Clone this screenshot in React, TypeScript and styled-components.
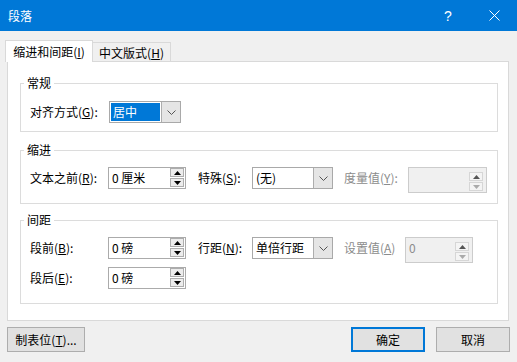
import React from 'react'
import styled, { createGlobalStyle } from 'styled-components'

const GlobalStyle = createGlobalStyle`
  html, body {
    margin: 0;
    padding: 0;
    background: #f0f0f0;
  }
  body {
    font-family: "Noto Sans CJK SC", "Noto Sans", sans-serif;
    font-size: 12px;
    line-height: 16px;
    color: #000;
  }
  * {
    box-sizing: border-box;
  }
`

const Dialog = styled.div`
  width: 517px;
  height: 362px;
  background: #f0f0f0;
  display: flex;
  flex-direction: column;
  overflow: hidden;
`

const TitleBar = styled.div`
  height: 31px;
  background: #0078d7;
  color: #fff;
  display: flex;
  align-items: center;
  padding-left: 8px;
  flex-shrink: 0;
`

const Title = styled.div`
  flex: 1;
  font-size: 12px;
`

const TitleButton = styled.div`
  width: 46px;
  height: 31px;
  display: flex;
  align-items: center;
  justify-content: center;
  font-family: "Liberation Sans", sans-serif;
  font-size: 14px;
  color: #fff;
`

const Body = styled.div`
  padding: 9px 8px 0 7px;
  display: flex;
  flex-direction: column;
`

const TabRow = styled.div`
  display: flex;
  align-items: flex-end;
  height: 22px;
  margin-left: -2px;
  margin-bottom: -1px;
  position: relative;
  z-index: 1;
`

const Tab = styled.div<{ $active?: boolean }>`
  width: ${({ $active }) => ($active ? '88px' : '78px')};
  height: ${({ $active }) => ($active ? '22px' : '19px')};
  margin-bottom: ${({ $active }) => ($active ? '0' : '1px')};
  background: ${({ $active }) => ($active ? '#fff' : '#f0f0f0')};
  border: 1px solid #d9d9d9;
  border-bottom: none;
  border-left: ${({ $active }) => ($active ? '1px solid #d9d9d9' : 'none')};
  display: flex;
  align-items: center;
  justify-content: center;
  padding-top: ${({ $active }) => ($active ? '0' : '2px')};
  white-space: nowrap;
`

const Panel = styled.div`
  height: 260px;
  background: #fff;
  border: 1px solid #d9d9d9;
  padding: 13px 10px 0 12px;
  display: flex;
  flex-direction: column;
`

const Group = styled.fieldset<{ $top: number; $bottom: number }>`
  margin: ${({ $top }) => $top}px 0 0 0;
  border: 1px solid #dcdcdc;
  padding: 0 0 ${({ $bottom }) => $bottom}px 9px;
  min-width: 0;
  display: flex;
  flex-direction: column;
  gap: 8px;
`

const Legend = styled.legend<{ $pad: number }>`
  padding: 0 3px;
  margin-left: -6px;
  line-height: 16px;
  margin-bottom: ${({ $pad }) => $pad}px;
`

const Row = styled.div`
  display: flex;
  align-items: flex-start;
  height: 22px;
`

const Label = styled.div<{ $w: number; $disabled?: boolean }>`
  width: ${({ $w }) => $w}px;
  flex-shrink: 0;
  height: 22px;
  line-height: 22px;
  color: ${({ $disabled }) => ($disabled ? '#8c8c8c' : '#000')};
  white-space: nowrap;
`

const Gap = styled.div<{ $w: number }>`
  width: ${({ $w }) => $w}px;
  flex-shrink: 0;
`

const Combo = styled.div<{ $w: number }>`
  width: ${({ $w }) => $w}px;
  height: 22px;
  border: 1px solid #a9a9a9;
  background: #fff;
  display: flex;
  flex-shrink: 0;
`

const ComboText = styled.div<{ $selected?: boolean }>`
  flex: 1;
  margin: 1px;
  padding-left: 2px;
  line-height: 18px;
  background: ${({ $selected }) => ($selected ? '#0078d7' : 'transparent')};
  color: ${({ $selected }) => ($selected ? '#fff' : '#000')};
  white-space: nowrap;
`

const ComboArrow = styled.div`
  width: 19px;
  background: #e5e5e5;
  border-left: 1px solid #adadad;
  display: flex;
  align-items: center;
  justify-content: center;
`

const Spin = styled.div<{ $w: number; $disabled?: boolean }>`
  width: ${({ $w }) => $w}px;
  height: ${({ $disabled }) => ($disabled ? '26px' : '22px')};
  border: 1px solid ${({ $disabled }) => ($disabled ? '#cccccc' : '#ababab')};
  background: ${({ $disabled }) => ($disabled ? '#f0f0f0' : '#fff')};
  color: ${({ $disabled }) => ($disabled ? '#8c8c8c' : '#000')};
  display: flex;
  align-items: flex-start;
  flex-shrink: 0;
`

const SpinText = styled.div`
  flex: 1;
  padding: 2px 0 0 3px;
  line-height: 16px;
  white-space: nowrap;
`

const SpinButtons = styled.div<{ $disabled?: boolean }>`
  width: 14px;
  margin: ${({ $disabled }) => ($disabled ? '4px 3px 0 0' : '0 1px 0 0')};
  display: flex;
  flex-direction: column;
  gap: 1px;
`

const SpinButton = styled.div<{ $faded?: boolean }>`
  height: 9px;
  border: 1px solid ${({ $faded }) => ($faded ? '#d6d6d6' : '#adadad')};
  background: ${({ $faded }) => ($faded ? '#f4f4f4' : '#ececec')};
  display: flex;
  align-items: center;
  justify-content: center;
`

const Footer = styled.div`
  display: flex;
  align-items: center;
  margin-top: 6px;
  margin-right: -1px;
  gap: 11px;
`

const Button = styled.div<{ $w: number; $default?: boolean }>`
  width: ${({ $w }) => $w}px;
  height: 25px;
  background: #e1e1e1;
  border: ${({ $default }) => ($default ? '2px solid #0078d7' : '1px solid #adadad')};
  display: flex;
  align-items: center;
  justify-content: center;
  white-space: nowrap;
`

const Spacer = styled.div`
  flex: 1;
`

const Chevron = () => (
  <svg width="9" height="5" viewBox="0 0 9 5">
    <polyline points="0.5,0.5 4.5,4.5 8.5,0.5" fill="none" stroke="#555" strokeWidth="1" />
  </svg>
)

const Triangle = ({ up, color }: { up?: boolean; color: string }) => (
  <svg width="7" height="4" viewBox="0 0 7 4">
    <polygon points={up ? '0,4 3.5,0 7,4' : '0,0 3.5,4 7,0'} fill={color} />
  </svg>
)

const CloseIcon = () => (
  <svg width="11" height="11" viewBox="0 0 11 11">
    <path d="M0.5 0.5 L10.5 10.5 M10.5 0.5 L0.5 10.5" stroke="#fff" strokeWidth="1" />
  </svg>
)

const SpinBox = ({ width, value, disabled }: { width: number; value?: string; disabled?: boolean }) => (
  <Spin $w={width} $disabled={disabled}>
    <SpinText>{value}</SpinText>
    <SpinButtons $disabled={disabled}>
      <SpinButton $faded={disabled}>
        <Triangle up color={disabled ? '#555' : '#000'} />
      </SpinButton>
      <SpinButton $faded={disabled}>
        <Triangle color={disabled ? '#aaa' : '#000'} />
      </SpinButton>
    </SpinButtons>
  </Spin>
)

const ComboBox = ({ width, value, selected }: { width: number; value: string; selected?: boolean }) => (
  <Combo $w={width}>
    <ComboText $selected={selected}>{value}</ComboText>
    <ComboArrow>
      <Chevron />
    </ComboArrow>
  </Combo>
)

export default function App() {
  return (
    <Dialog>
      <GlobalStyle />
      <TitleBar>
        <Title>段落</Title>
        <TitleButton>?</TitleButton>
        <TitleButton>
          <CloseIcon />
        </TitleButton>
      </TitleBar>
      <Body>
        <TabRow>
          <Tab $active>
            缩进和间距(<u>I</u>)
          </Tab>
          <Tab>
            中文版式(<u>H</u>)
          </Tab>
        </TabRow>
        <Panel>
          <Group $top={0} $bottom={8}>
            <Legend $pad={10}>常规</Legend>
            <Row>
              <Label $w={79}>
                对齐方式(<u>G</u>):
              </Label>
              <ComboBox width={72} value="居中" selected />
            </Row>
          </Group>
          <Group $top={10} $bottom={14}>
            <Legend $pad={9}>缩进</Legend>
            <Row>
              <Label $w={78}>
                文本之前(<u>R</u>):
              </Label>
              <SpinBox width={78} value="0 厘米" />
              <Gap $w={12} />
              <Label $w={54}>
                特殊(<u>S</u>):
              </Label>
              <ComboBox width={81} value="(无)" />
              <Gap $w={11} />
              <Label $w={64} $disabled>
                度量值(<u>Y</u>):
              </Label>
              <SpinBox width={79} disabled />
            </Row>
          </Group>
          <Group $top={8} $bottom={14}>
            <Legend $pad={9}>间距</Legend>
            <Row>
              <Label $w={78}>
                段前(<u>B</u>):
              </Label>
              <SpinBox width={78} value="0 磅" />
              <Gap $w={12} />
              <Label $w={54}>
                行距(<u>N</u>):
              </Label>
              <ComboBox width={81} value="单倍行距" />
              <Gap $w={11} />
              <Label $w={61} $disabled>
                设置值(<u>A</u>)
              </Label>
              <SpinBox width={68} value="0" disabled />
            </Row>
            <Row>
              <Label $w={78}>
                段后(<u>E</u>):
              </Label>
              <SpinBox width={78} value="0 磅" />
            </Row>
          </Group>
        </Panel>
        <Footer>
          <Button $w={78}>
            制表位(<u>T</u>)...
          </Button>
          <Spacer />
          <Button $w={74} $default>
            确定
          </Button>
          <Button $w={74}>取消</Button>
        </Footer>
      </Body>
    </Dialog>
  )
}
